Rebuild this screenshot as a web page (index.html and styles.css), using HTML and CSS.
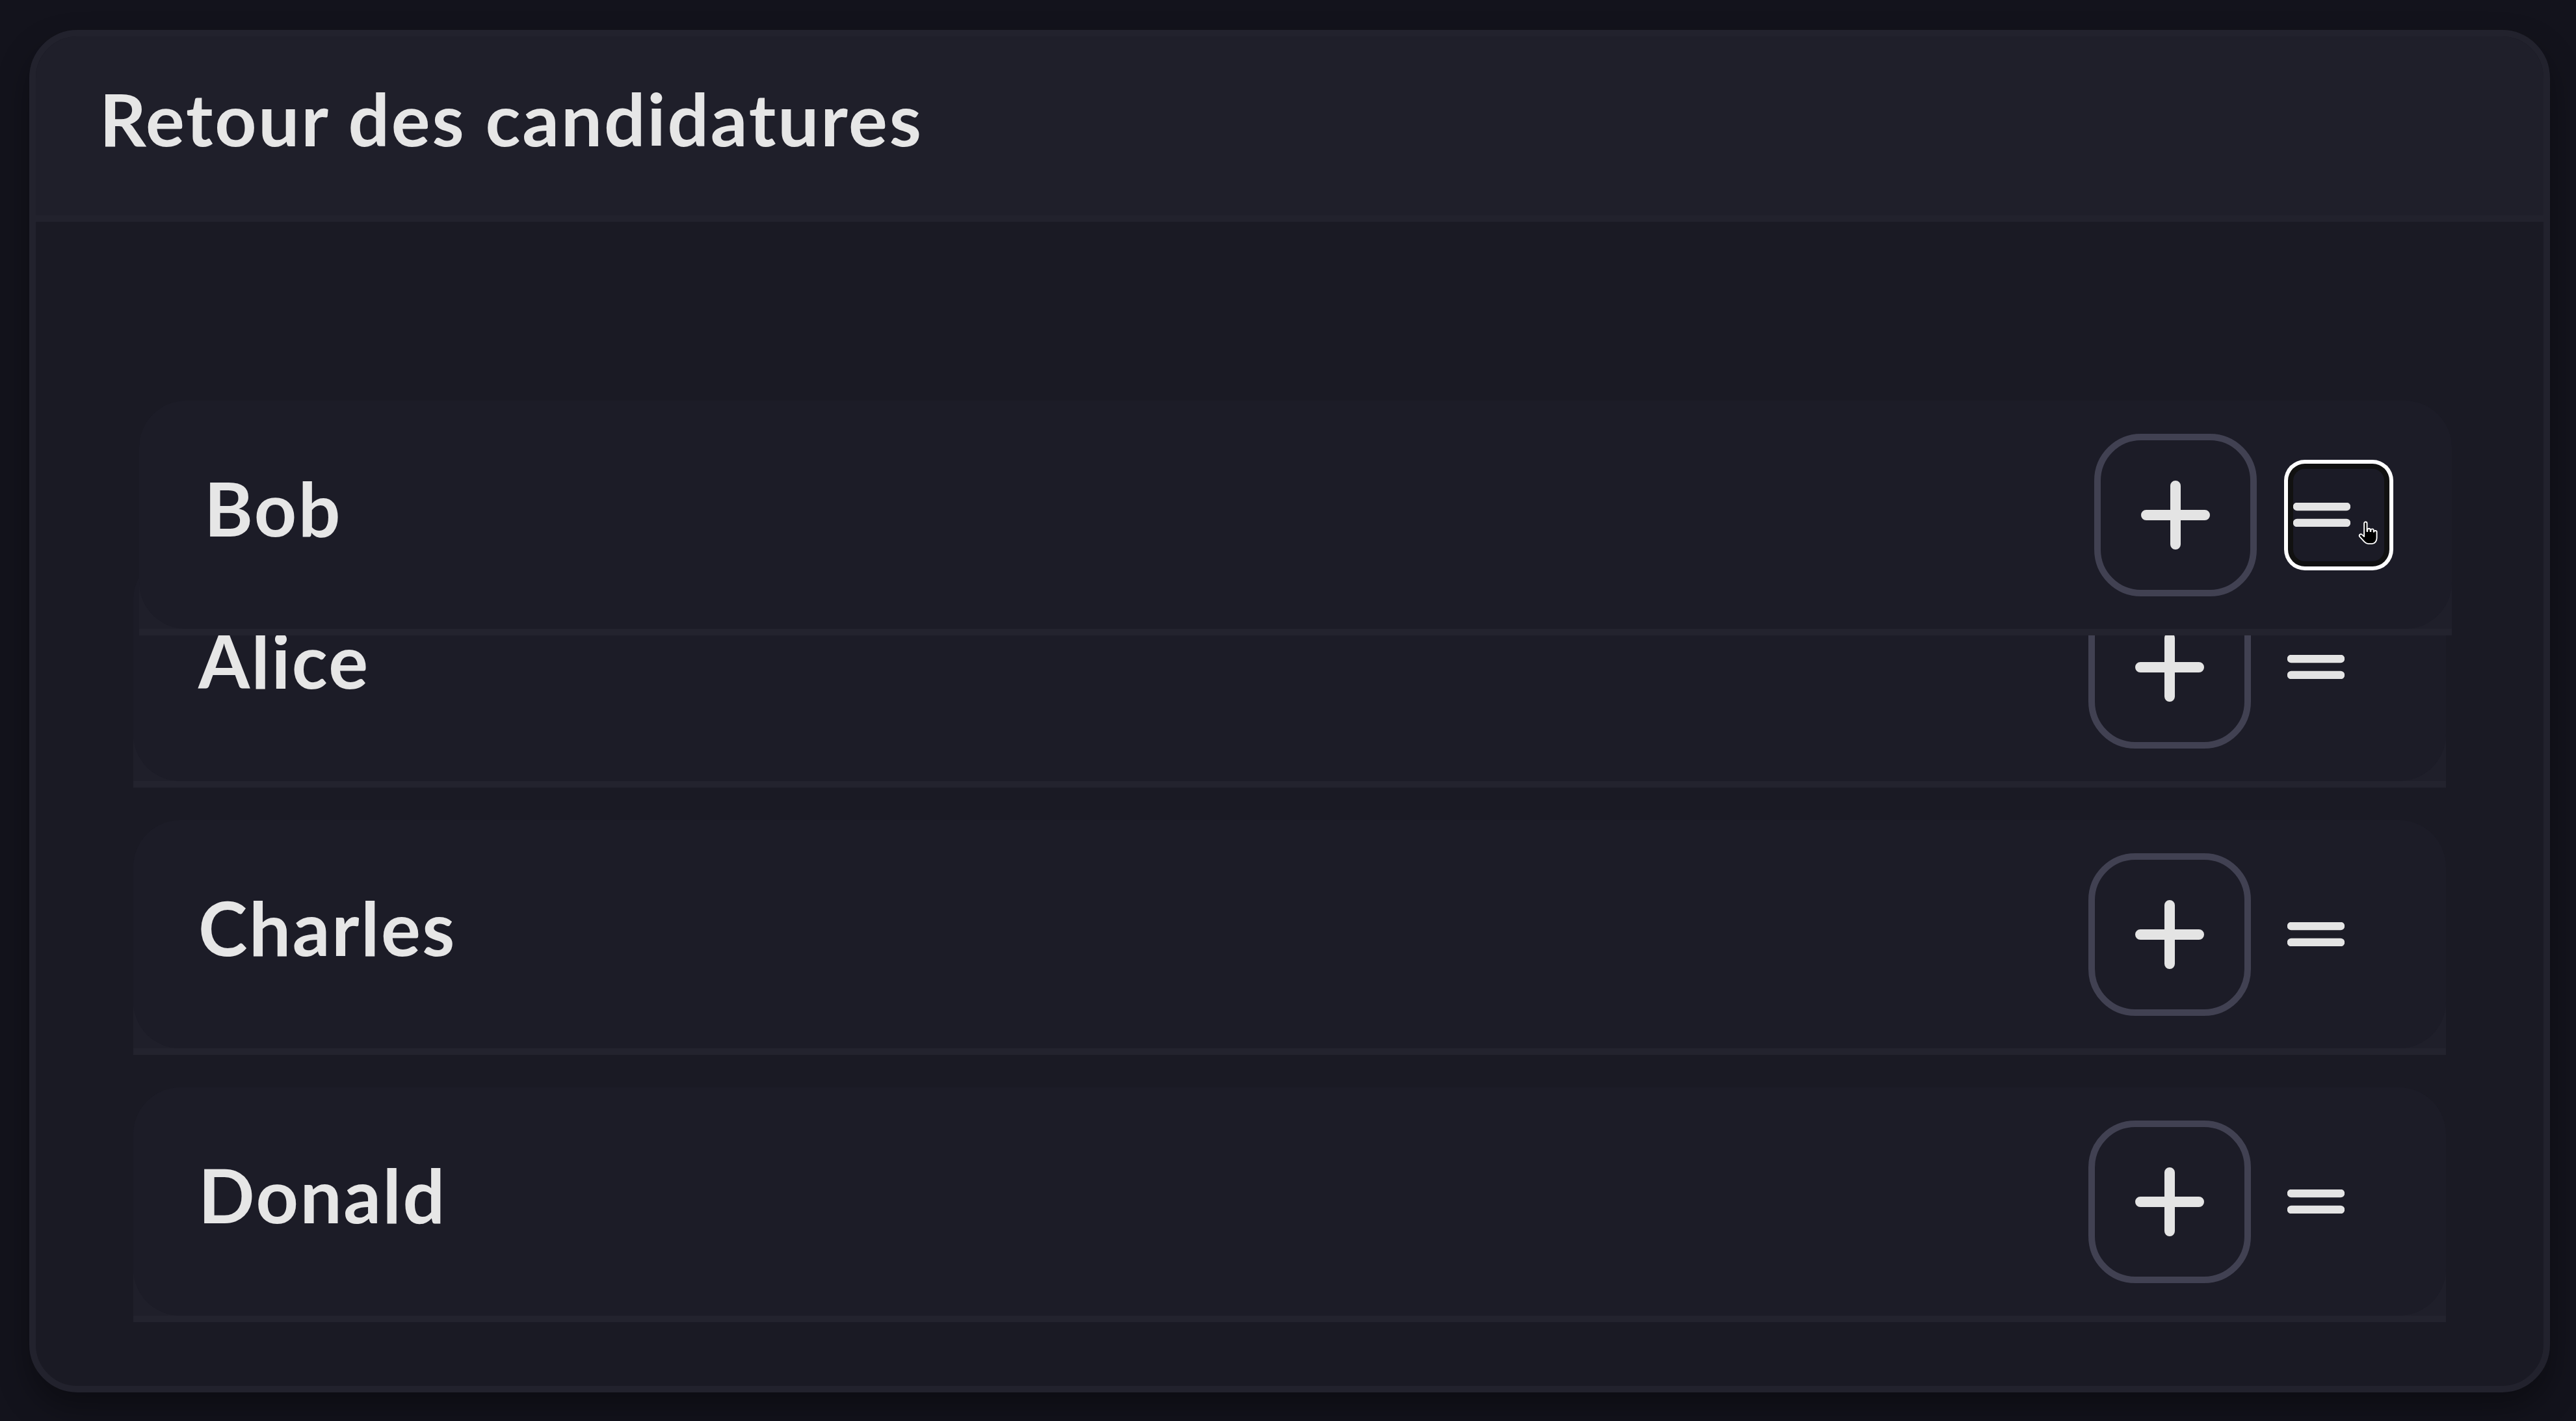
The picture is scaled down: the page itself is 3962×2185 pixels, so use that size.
FILE: index.html
```html
<!DOCTYPE html>
<html lang="fr">
<head>
<meta charset="utf-8">
<title>Retour des candidatures</title>
<link rel="stylesheet" href="styles.css">
</head>
<body>
<section class="card">
  <header class="card-head">
    <h1 class="title">Retour des candidatures</h1>
  </header>
  <div class="card-body">
    <ul class="list">
      <li class="slot dragging">
        <div class="row">
          <span class="name">Bob</span>
          <button class="add" type="button" aria-label="Ajouter">
            <svg class="plus" viewBox="0 0 106 106" width="106" height="106"><path d="M53 8V98M8 53H98" stroke="#e4e4e4" stroke-width="16" stroke-linecap="round" fill="none"/></svg>
          </button>
          <button class="handle focus" type="button" aria-label="Déplacer">
            <svg class="grip" viewBox="0 0 88 37" width="88" height="37"><path d="M6 6H82M6 31H82" stroke="#e4e4e4" stroke-width="12.5" stroke-linecap="round" fill="none"/></svg>
            <svg class="cursor" viewBox="0 0 24 26" width="36" height="38"><path d="M8 2.5a1.5 1.5 0 0 1 3 0V11h.5V9.5a1.5 1.5 0 0 1 3 0V11h.5v-1a1.5 1.5 0 0 1 3 0v1.5h.3a1.5 1.5 0 0 1 3 .5V18c0 3-2 6-5 6h-4c-2 0-3-1-4-2l-5-5.5a1.6 1.6 0 0 1 2.3-2.2L8 16.5Z" fill="#000" stroke="#fff" stroke-width="1.3" stroke-linejoin="round"/></svg>
          </button>
        </div>
      </li>
      <li class="slot">
        <div class="row">
          <span class="name">Alice</span>
          <button class="add" type="button" aria-label="Ajouter">
            <svg class="plus" viewBox="0 0 106 106" width="106" height="106"><path d="M53 8V98M8 53H98" stroke="#e4e4e4" stroke-width="16" stroke-linecap="round" fill="none"/></svg>
          </button>
          <button class="handle" type="button" aria-label="Déplacer">
            <svg class="grip" viewBox="0 0 88 37" width="88" height="37"><path d="M6 6H82M6 31H82" stroke="#e4e4e4" stroke-width="12.5" stroke-linecap="round" fill="none"/></svg>
          </button>
        </div>
      </li>
      <li class="slot">
        <div class="row">
          <span class="name">Charles</span>
          <button class="add" type="button" aria-label="Ajouter">
            <svg class="plus" viewBox="0 0 106 106" width="106" height="106"><path d="M53 8V98M8 53H98" stroke="#e4e4e4" stroke-width="16" stroke-linecap="round" fill="none"/></svg>
          </button>
          <button class="handle" type="button" aria-label="Déplacer">
            <svg class="grip" viewBox="0 0 88 37" width="88" height="37"><path d="M6 6H82M6 31H82" stroke="#e4e4e4" stroke-width="12.5" stroke-linecap="round" fill="none"/></svg>
          </button>
        </div>
      </li>
      <li class="slot">
        <div class="row">
          <span class="name">Donald</span>
          <button class="add" type="button" aria-label="Ajouter">
            <svg class="plus" viewBox="0 0 106 106" width="106" height="106"><path d="M53 8V98M8 53H98" stroke="#e4e4e4" stroke-width="16" stroke-linecap="round" fill="none"/></svg>
          </button>
          <button class="handle" type="button" aria-label="Déplacer">
            <svg class="grip" viewBox="0 0 88 37" width="88" height="37"><path d="M6 6H82M6 31H82" stroke="#e4e4e4" stroke-width="12.5" stroke-linecap="round" fill="none"/></svg>
          </button>
        </div>
      </li>
    </ul>
  </div>
</section>
</body>
</html>
```
FILE: styles.css
```css
* { box-sizing: border-box; }

html, body { height: 100%; }

body {
  margin: 0;
  padding: 46px 40px 44px 45px;
  background: #13131c;
  font-family: Lato, "Noto Sans", sans-serif;
  color: #e6e6e6;
}

.card {
  border: 10px solid #22222d;
  border-radius: 74px;
  background: #1a1a24;
  overflow: hidden;
  box-shadow: 0 24px 48px rgba(0, 0, 0, 0.35);
}

.card-head {
  height: 285px;
  display: flex;
  align-items: center;
  padding: 0 92px 22px 98px;
  background: #1f1f2a;
  border-bottom: 10px solid #22222d;
}

.title {
  margin: 0;
  font-size: 112px;
  font-weight: 700;
  letter-spacing: 2.8px;
  line-height: 1.2;
  color: #e6e6e6;
}

.card-body {
  padding: 98px 150px;
}

.list {
  list-style: none;
  margin: 0;
  padding: 0;
  display: flex;
  flex-direction: column;
  gap: 50px;
}

.slot {
  height: 361px;
  border-bottom: 10px solid #23232e;
  background: linear-gradient(to bottom, transparent 50%, #1f1f2a 50%);
}

.slot.dragging {
  position: relative;
  z-index: 2;
  transform: translate(9px, 177px);
}

.row {
  height: 100%;
  display: flex;
  align-items: center;
  padding: 0 104px 0 100px;
  border-radius: 72px;
  background: #1c1c27;
}

.name {
  flex: 1;
  font-size: 114px;
  font-weight: 700;
  letter-spacing: 2.5px;
  line-height: 1.2;
  padding-bottom: 20px;
  color: #e6e6e6;
}

.add {
  width: 250px;
  height: 250px;
  padding: 0;
  display: flex;
  align-items: center;
  justify-content: center;
  border: 10px solid #414152;
  border-radius: 72px;
  background: transparent;
}

.plus { display: block; }

.handle {
  position: relative;
  width: 140px;
  height: 142px;
  margin-left: 56px;
  padding: 0;
  display: flex;
  align-items: center;
  border: 0;
  border-radius: 18px;
  background: transparent;
}

.handle.focus {
  background: #1b1b26;
  box-shadow: 0 0 0 8px #111111, 0 0 0 14px #ffffff;
}

.grip { display: block; }

.cursor {
  position: absolute;
  left: 97px;
  top: 80px;
}
```
